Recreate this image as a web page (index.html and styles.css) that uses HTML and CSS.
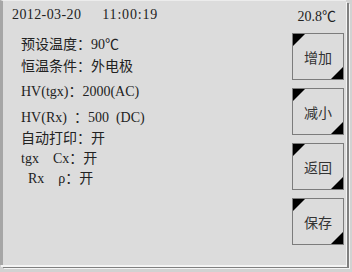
FILE: index.html
```html
<!DOCTYPE html>
<html lang="zh-CN">
<head>
<meta charset="utf-8">
<link rel="stylesheet" href="styles.css">
</head>
<body>
<div class="screen">
  <div class="header">
    <span class="date">2012-03-20</span>
    <span class="time">11:00:19</span>
    <span class="temp">20.8℃</span>
  </div>
  <div class="main">
    <div class="params">
      <div class="row">预设温度：90℃</div>
      <div class="row r2">恒温条件：外电极</div>
      <div class="row r3">HV(tgx)：2000(AC)</div>
      <div class="row r4">HV(Rx) ：500 (DC)</div>
      <div class="row r5">自动打印：开</div>
      <div class="row r6">tgx  Cx：开</div>
      <div class="row r7"> Rx  ρ：开</div>
    </div>
    <div class="buttons">
      <div class="btn">增加</div>
      <div class="btn">减小</div>
      <div class="btn">返回</div>
      <div class="btn">保存</div>
    </div>
  </div>
</div>
</body>
</html>
```
FILE: styles.css
```css
html, body {
  margin: 0;
  padding: 0;
}
body {
  width: 352px;
  height: 272px;
  overflow: hidden;
  background: #d2d2d2;
  font-family: "Liberation Serif", "Noto Sans CJK SC", serif;
  font-size: 14px;
  color: #222;
}
.screen {
  box-sizing: border-box;
  width: 346px;
  height: 265px;
  background: #dcdcdc;
  border-left: 3px solid #a6a6a6;
  border-top: 1px solid #ececec;
  box-shadow: 1px 2px 0 #f4f4f4, 3px 3px 0 #808080, 4px 4px 0 #f4f4f4;
  display: flex;
  flex-direction: column;
}
.header {
  display: flex;
  align-items: flex-start;
  height: 32px;
  padding: 0 10px 0 9px;
  letter-spacing: 0.4px;
}
.date {
  line-height: 20px;
  margin-top: 4px;
}
.time {
  line-height: 20px;
  margin-top: 4px;
  margin-left: 21px;
  letter-spacing: 0.8px;
}
.temp {
  line-height: 20px;
  margin-top: 6px;
  margin-left: auto;
  letter-spacing: 0;
}
.main {
  flex: 1;
  display: flex;
  padding-right: 2px;
}
.params {
  flex: 1;
  padding: 2px 0 0 18px;
}
.row {
  line-height: 20px;
  height: 20px;
  white-space: pre;
  word-spacing: 3.5px;
}
.r2 { margin-top: 2px; }
.r3 { margin-top: 5px; }
.r4 { margin-top: 6px; }
.r5 { margin-top: 1px; }
.r6 { margin-top: 0; }
.r7 { margin-top: 0; }
.buttons {
  display: flex;
  flex-direction: column;
  gap: 8px;
  width: 52px;
}
.btn {
  position: relative;
  box-sizing: border-box;
  width: 52px;
  height: 47px;
  border: 1px solid #7c7c7c;
  display: flex;
  align-items: center;
  justify-content: center;
  font-family: "Noto Sans CJK SC", sans-serif;
  font-size: 14px;
  color: #333;
}
.btn::before {
  content: "";
  position: absolute;
  top: 0;
  left: 0;
  border-top: 12px solid #000;
  border-right: 12px solid transparent;
}
.btn::after {
  content: "";
  position: absolute;
  bottom: 0;
  right: 0;
  border-bottom: 12px solid #000;
  border-left: 12px solid transparent;
}
```
